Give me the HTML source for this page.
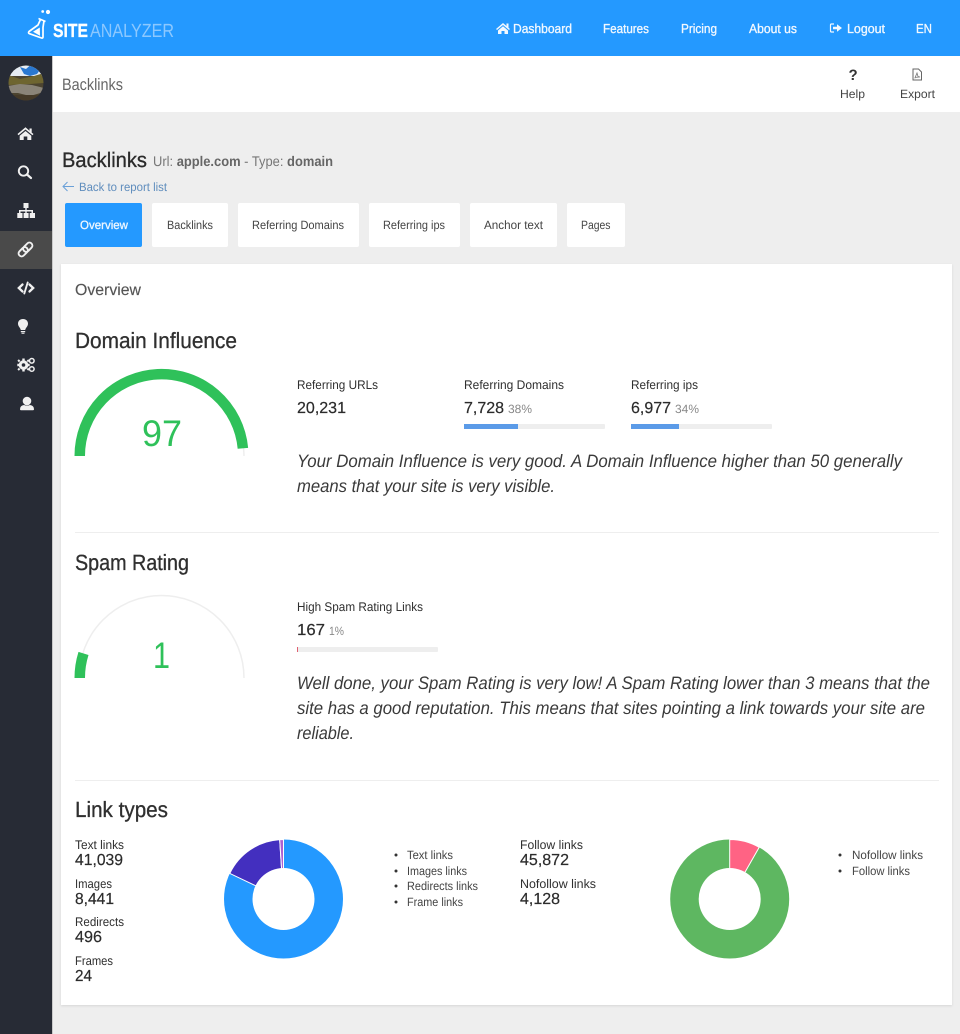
<!DOCTYPE html>
<html lang="en"><head><meta charset="utf-8"><title>Backlinks</title>
<style>
html,body{margin:0;padding:0;background:#eee}
svg{display:block}
text{font-family:"Liberation Sans",sans-serif;text-rendering:geometricPrecision}
.n{font-size:13px;fill:#f2f8ff;stroke:#f2f8ff;stroke-width:.3px}
.t{font-size:12px;fill:#444}
.l{font-size:12.5px;fill:#2f2f2f}
.v{font-size:16px;fill:#2b2b2b;stroke:#2b2b2b;stroke-width:.2px}
.p{font-size:12px;fill:#888}
.h{font-size:22px;fill:#2f2f2f;stroke:#2f2f2f;stroke-width:.3px}
.i{font-size:18px;fill:#3a3a3a;font-style:italic}
.g{font-size:37px;fill:#2fc15a}
</style></head><body>
<svg xmlns="http://www.w3.org/2000/svg" width="960" height="1034" viewBox="0 0 960 1034">
<defs>
<clipPath id="av"><circle cx="26" cy="83" r="17.5"/></clipPath>
<filter id="sh" x="-2%" y="-2%" width="104%" height="104%"><feDropShadow dx="0" dy="1" stdDeviation="1.2" flood-color="#000" flood-opacity=".1"/></filter>
</defs>
<rect width="960" height="1034" fill="#eee"/>
<rect width="960" height="56" fill="#2499ff"/>
<rect x="52" y="56" width="908" height="56" fill="#fff"/>
<rect y="56" width="52" height="978" fill="#272b35"/>
<rect x="52" y="56" width="1" height="978" fill="#c9c9c9"/>

<!-- logo -->
<circle cx="42.700" cy="11.500" r="1.400" fill="#fff"/><circle cx="48" cy="12" r="2.100" fill="#fff"/>
<path d="M38.500 18.500L45.500 21.500M40.500 19.500L38 25L29 31.500Q27.800 33 29.500 33.700L41.500 38Q43 38.300 43 37L43 27.500L44 20.800" fill="none" stroke="#fff" stroke-width="1.700" stroke-linejoin="round"/>
<path d="M33 31.800L39.800 27.500L40 35.800z" fill="#fff"/>
<text x="53" y="37" font-size="19" font-weight="700" fill="#fff" stroke="#fff" stroke-width=".3" textLength="35" lengthAdjust="spacingAndGlyphs">SITE</text>
<text x="90" y="37" font-size="19" fill="#8cc8ff" textLength="84" lengthAdjust="spacingAndGlyphs">ANALYZER</text>

<!-- nav -->
<path d="M496 29L503 23L506.500 26V23.500H508.500V27.800L510 29L509 30L503 25L497 30zM498 30.500L503 26.300L508 30.500V34H504.500V31H501.500V34H498z" fill="#f2f8ff"/>
<text class="n" x="513" y="33" textLength="59" lengthAdjust="spacingAndGlyphs">Dashboard</text>
<text class="n" x="603" y="33" textLength="46" lengthAdjust="spacingAndGlyphs">Features</text>
<text class="n" x="681" y="33" textLength="36" lengthAdjust="spacingAndGlyphs">Pricing</text>
<text class="n" x="749" y="33" textLength="48" lengthAdjust="spacingAndGlyphs">About us</text>
<path d="M834 24H831.500Q830.500 24 830.500 25V31Q830.500 32 831.500 32H834" fill="none" stroke="#f2f8ff" stroke-width="1.200"/>
<path d="M833 26.800H837V24.300L842 28L837 31.700V29.200H833z" fill="#f2f8ff"/>
<text class="n" x="847" y="33" textLength="38" lengthAdjust="spacingAndGlyphs">Logout</text>
<text class="n" x="916" y="33" textLength="16" lengthAdjust="spacingAndGlyphs">EN</text>

<!-- top bar -->
<text x="62" y="90" font-size="16.500" fill="#666" textLength="61" lengthAdjust="spacingAndGlyphs">Backlinks</text>
<text x="848.500" y="80" font-size="15" font-weight="700" fill="#333">?</text>
<path d="M913 69H918.500L921.500 72V80H913z" fill="none" stroke="#666" stroke-width="1"/>
<path d="M914.800 78.300L917 73L918 76.500L920 77L915.500 77.300" fill="none" stroke="#777" stroke-width=".8"/>
<text class="t" x="840" y="98" textLength="25" lengthAdjust="spacingAndGlyphs">Help</text>
<text class="t" x="900" y="98" textLength="35" lengthAdjust="spacingAndGlyphs">Export</text>

<!-- avatar -->
<g clip-path="url(#av)">
<rect x="8" y="65" width="36" height="36" fill="#4c4430"/>
<rect x="8" y="65" width="36" height="11" fill="#e6ecf2"/>
<path d="M20 67L26 69L30 65.500L40 70L37 74L30 76L24 74z" fill="#2a78d0"/>
<path d="M8 75L20 79L34 76L44 73V83L30 84L8 85z" fill="#6e6530"/>
<path d="M8 86L20 84L32 85L44 88V92L30 96L18 93L8 93z" fill="#8a8478"/>
<rect x="8" y="95" width="36" height="7" fill="#453a28"/>
</g>

<!-- sidebar -->
<rect y="231" width="52" height="38" fill="#4a4a4a"/>
<g fill="#f0f0f0">
<path d="M17.500 134L25.500 127.300L29.500 130.700V128.500H31.700V132.600L33.500 134L32.500 135.200L25.500 129.500L18.500 135.200zM19.700 135.700L25.500 131L31.300 135.700V140H27.300V136.500H23.700V140H19.700z"/>
<!-- sitemap -->
<path d="M23.500 203H28.500V208H26.700V210H33V213H35V218H29.700V213H31.500V211.500H26.700V213H28.600V218H23.600V213H25.300V211.500H20.500V213H22.500V218H17.300V213H19V210H25.300V208H23.500z"/>
<!-- bulb -->
<path d="M23 319C19.800 319 18 321.300 18 323.600C18 326.500 20.300 327.500 20.800 330H25.200C25.700 327.500 28 326.500 28 323.600C28 321.300 26.200 319 23 319zM20.800 331H25.200V332.200H20.800zM21.500 332.800H24.500V333.800H21.500z"/>
<!-- user -->
<circle cx="27" cy="401" r="4.300"/>
<path d="M20 409.300Q20 405.500 24 405Q27 406.300 30 405Q34 405.500 34 409.300Q34 410.300 33 410.300H21Q20 410.300 20 409.300z"/>
<!-- gear -->
<circle cx="23.500" cy="365" r="4.800"/>
<path d="M22.300 358.500H24.700V361H22.300zM22.300 369H24.700V371.500H22.300zM17.300 363.800H19.500V366.200H17.300zM27.500 363.800H29.700V366.200H27.500zM18.800 359.300L20.300 360.800L18.900 362.200L17.400 360.700zM28.200 359.300L29.600 360.700L28.100 362.200L26.700 360.800zM18.900 367.800L20.300 369.200L18.800 370.700L17.400 369.300zM28.100 367.800L29.600 369.300L28.200 370.700L26.700 369.200z"/>
</g>
<circle cx="23.500" cy="365" r="1.800" fill="#272b35"/>
<g fill="none" stroke="#f0f0f0" stroke-linecap="round">
<circle cx="23.500" cy="171" r="4.700" stroke-width="1.900"/>
<path d="M27 174.500L31 178" stroke-width="2.200"/>
<g transform="rotate(-45 25.500 249.500)" stroke-width="1.900">
<rect x="17" y="246.500" width="10.500" height="6" rx="3"/>
<rect x="23.500" y="246.500" width="10.500" height="6" rx="3"/>
</g>
<path d="M22.500 284.500L18.800 288L22.500 291.500M29.500 284.500L33.200 288L29.500 291.500" stroke-width="2.300"/>
<path d="M27.700 282.500L24.300 293.500" stroke-width="1.900"/>
<circle cx="31.800" cy="360.800" r="2.300" stroke-width="1.500"/>
<circle cx="31.800" cy="369" r="2.300" stroke-width="1.500"/>
</g>

<!-- page heading -->
<text x="62" y="167" font-size="21" fill="#2a2a2a" stroke="#2a2a2a" stroke-width=".3" textLength="85" lengthAdjust="spacingAndGlyphs">Backlinks</text>
<text x="153" y="166" font-size="14" fill="#777" textLength="180" lengthAdjust="spacingAndGlyphs">Url: <tspan font-weight="700" fill="#666">apple.com</tspan> - Type: <tspan font-weight="700" fill="#666">domain</tspan></text>
<path d="M74 186.500H63.500M67.500 182L63 186.500L67.500 191" fill="none" stroke="#6aa0d8" stroke-width="1"/>
<text x="79" y="191" font-size="12" fill="#5f8dbd" textLength="88" lengthAdjust="spacingAndGlyphs">Back to report list</text>

<!-- tabs -->
<rect x="65" y="203" width="77" height="44" rx="2" fill="#2499ff"/>
<rect x="152" y="203" width="76" height="44" rx="2" fill="#fff"/>
<rect x="238" y="203" width="121" height="44" rx="2" fill="#fff"/>
<rect x="369" y="203" width="91" height="44" rx="2" fill="#fff"/>
<rect x="470" y="203" width="87" height="44" rx="2" fill="#fff"/>
<rect x="567" y="203" width="58" height="44" rx="2" fill="#fff"/>
<text x="80" y="229" font-size="12" fill="#eef6ff" stroke="#eef6ff" stroke-width=".3" textLength="48" lengthAdjust="spacingAndGlyphs">Overview</text>
<text class="t" x="167" y="229" textLength="46" lengthAdjust="spacingAndGlyphs">Backlinks</text>
<text class="t" x="252" y="229" textLength="92" lengthAdjust="spacingAndGlyphs">Referring Domains</text>
<text class="t" x="383" y="229" textLength="62" lengthAdjust="spacingAndGlyphs">Referring ips</text>
<text class="t" x="484" y="229" textLength="59" lengthAdjust="spacingAndGlyphs">Anchor text</text>
<text class="t" x="581" y="229" textLength="29.500" lengthAdjust="spacingAndGlyphs">Pages</text>

<!-- card -->
<rect x="61" y="264" width="891" height="741" fill="#fff" filter="url(#sh)"/>
<text x="75" y="295" font-size="16" fill="#555" stroke="#555" stroke-width=".15" textLength="66" lengthAdjust="spacingAndGlyphs">Overview</text>

<text class="h" x="75" y="348" textLength="162" lengthAdjust="spacingAndGlyphs">Domain Influence</text>
<path d="M244 456A82.500 82.500 0 0 0 243.500 448" fill="none" stroke="#eee" stroke-width="1.500"/>
<path d="M79.750 456A81.750 81.750 0 0 1 242.900 448.300" fill="none" stroke="#2fc15a" stroke-width="10.500"/>
<text class="g" x="142" y="446" textLength="40" lengthAdjust="spacingAndGlyphs">97</text>

<text class="l" x="297" y="389" textLength="81" lengthAdjust="spacingAndGlyphs">Referring URLs</text>
<text class="v" x="297" y="413" textLength="49" lengthAdjust="spacingAndGlyphs">20,231</text>
<text class="l" x="464" y="389" textLength="100" lengthAdjust="spacingAndGlyphs">Referring Domains</text>
<text class="v" x="464" y="413" textLength="40" lengthAdjust="spacingAndGlyphs">7,728</text>
<text class="p" x="508" y="413" textLength="24" lengthAdjust="spacingAndGlyphs">38%</text>
<rect x="464" y="424" width="141" height="5" rx="1" fill="#eee"/><rect x="464" y="424" width="54" height="5" fill="#5b9be8"/>
<text class="l" x="631" y="389" textLength="67" lengthAdjust="spacingAndGlyphs">Referring ips</text>
<text class="v" x="631" y="413" textLength="40" lengthAdjust="spacingAndGlyphs">6,977</text>
<text class="p" x="675" y="413" textLength="24" lengthAdjust="spacingAndGlyphs">34%</text>
<rect x="631" y="424" width="141" height="5" rx="1" fill="#eee"/><rect x="631" y="424" width="48" height="5" fill="#5b9be8"/>

<text class="i" x="297" y="467" textLength="605" lengthAdjust="spacingAndGlyphs">Your Domain Influence is very good. A Domain Influence higher than 50 generally</text>
<text class="i" x="297" y="492" textLength="258" lengthAdjust="spacingAndGlyphs">means that your site is very visible.</text>

<rect x="75" y="532" width="864" height="1" fill="#eee"/>

<text class="h" x="75" y="570" textLength="114" lengthAdjust="spacingAndGlyphs">Spam Rating</text>
<path d="M79 678A82.500 82.500 0 0 1 244 678" fill="none" stroke="#eee" stroke-width="1.500"/>
<path d="M79.750 678A81.750 81.750 0 0 1 83.500 653.400" fill="none" stroke="#2fc15a" stroke-width="10.500"/>
<text class="g" x="153" y="668" textLength="17" lengthAdjust="spacingAndGlyphs">1</text>

<text class="l" x="297" y="611" textLength="126" lengthAdjust="spacingAndGlyphs">High Spam Rating Links</text>
<text class="v" x="297" y="635" textLength="28" lengthAdjust="spacingAndGlyphs">167</text>
<text class="p" x="329" y="635" textLength="15" lengthAdjust="spacingAndGlyphs">1%</text>
<rect x="297" y="647" width="141" height="5" rx="1" fill="#eee"/><rect x="297" y="647" width="1" height="5" fill="#e06070"/>
<text class="i" x="297" y="689" textLength="633" lengthAdjust="spacingAndGlyphs">Well done, your Spam Rating is very low! A Spam Rating lower than 3 means that the</text>
<text class="i" x="297" y="714" textLength="628" lengthAdjust="spacingAndGlyphs">site has a good reputation. This means that sites pointing a link towards your site are</text>
<text class="i" x="297" y="739" textLength="57" lengthAdjust="spacingAndGlyphs">reliable.</text>

<rect x="75" y="780" width="864" height="1" fill="#eee"/>

<text class="h" x="75" y="817" textLength="93" lengthAdjust="spacingAndGlyphs">Link types</text>

<text class="l" x="75" y="849" textLength="49" lengthAdjust="spacingAndGlyphs">Text links</text>
<text class="v" x="75" y="865" textLength="48" lengthAdjust="spacingAndGlyphs">41,039</text>
<text class="l" x="75" y="888" textLength="37" lengthAdjust="spacingAndGlyphs">Images</text>
<text class="v" x="75" y="904" textLength="39" lengthAdjust="spacingAndGlyphs">8,441</text>
<text class="l" x="75" y="926" textLength="49" lengthAdjust="spacingAndGlyphs">Redirects</text>
<text class="v" x="75" y="942" textLength="27" lengthAdjust="spacingAndGlyphs">496</text>
<text class="l" x="75" y="965" textLength="38" lengthAdjust="spacingAndGlyphs">Frames</text>
<text class="v" x="75" y="981" textLength="17" lengthAdjust="spacingAndGlyphs">24</text>

<!-- donut 1 -->
<g stroke="#fff" stroke-width="1">
<circle cx="283.500" cy="899" r="59.500" fill="#2499ff" stroke="none"/>
<path d="M283.500 899L229.800 873.400A59.500 59.500 0 0 1 279.700 839.600z" fill="#432fbf"/>
<path d="M283.500 899L279.700 839.600A59.500 59.500 0 0 1 283.500 839.500z" fill="#b060d0"/>
</g>
<circle cx="283.500" cy="899" r="31" fill="#fff"/>

<g fill="#333"><circle cx="396" cy="855" r="1.500"/><circle cx="396" cy="871" r="1.500"/><circle cx="396" cy="886" r="1.500"/><circle cx="396" cy="902" r="1.500"/><circle cx="840" cy="855" r="1.500"/><circle cx="840" cy="871" r="1.500"/></g>
<text class="t" x="407" y="859" textLength="46" lengthAdjust="spacingAndGlyphs">Text links</text>
<text class="t" x="407" y="875" textLength="60" lengthAdjust="spacingAndGlyphs">Images links</text>
<text class="t" x="407" y="890" textLength="71" lengthAdjust="spacingAndGlyphs">Redirects links</text>
<text class="t" x="407" y="906" textLength="56" lengthAdjust="spacingAndGlyphs">Frame links</text>

<text class="l" x="520" y="849" textLength="63" lengthAdjust="spacingAndGlyphs">Follow links</text>
<text class="v" x="520" y="865" textLength="49" lengthAdjust="spacingAndGlyphs">45,872</text>
<text class="l" x="520" y="888" textLength="76" lengthAdjust="spacingAndGlyphs">Nofollow links</text>
<text class="v" x="520" y="904" textLength="40" lengthAdjust="spacingAndGlyphs">4,128</text>

<!-- donut 2 -->
<circle cx="729.700" cy="899" r="59.500" fill="#5eb761"/>
<path d="M729.700 899V839.500A59.500 59.500 0 0 1 759.200 847.300z" fill="#ff6384" stroke="#fff" stroke-width="1"/>
<circle cx="729.700" cy="899" r="31" fill="#fff"/>

<text class="t" x="852" y="859" textLength="71" lengthAdjust="spacingAndGlyphs">Nofollow links</text>
<text class="t" x="852" y="875" textLength="58" lengthAdjust="spacingAndGlyphs">Follow links</text>
</svg>
</body></html>
